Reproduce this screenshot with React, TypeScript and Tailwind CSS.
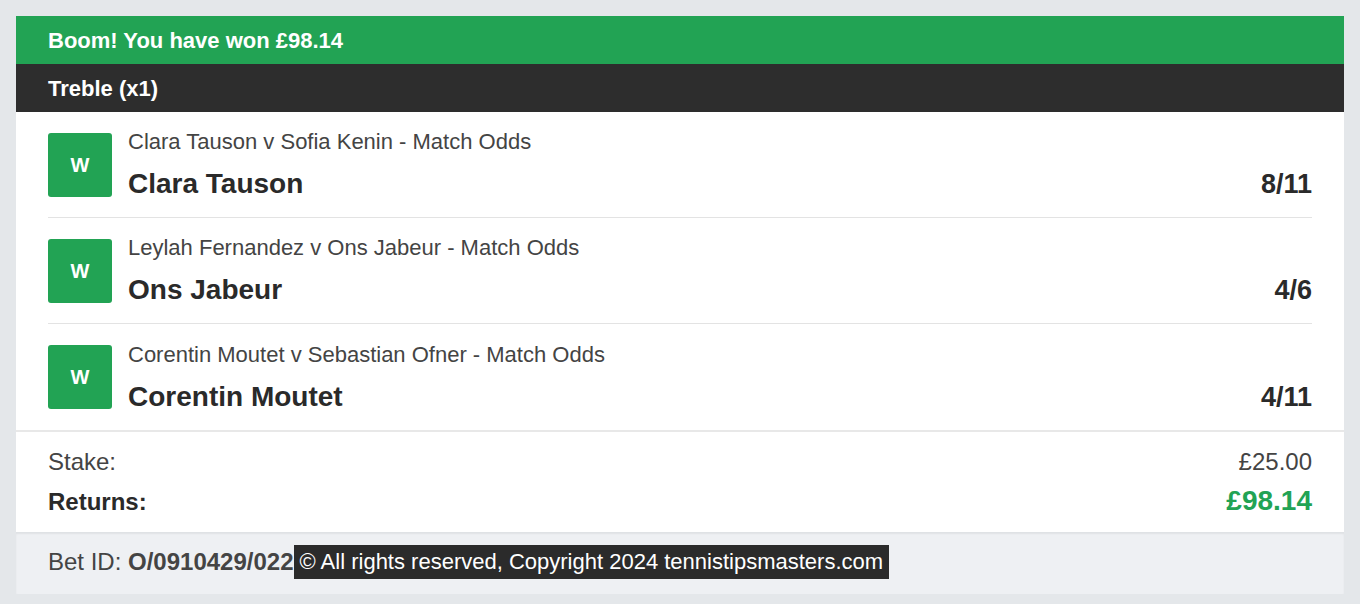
const LEGS = [
  { market: 'Clara Tauson v Sofia Kenin - Match Odds', pick: 'Clara Tauson', odds: '8/11' },
  { market: 'Leylah Fernandez v Ons Jabeur - Match Odds', pick: 'Ons Jabeur', odds: '4/6' },
  { market: 'Corentin Moutet v Sebastian Ofner - Match Odds', pick: 'Corentin Moutet', odds: '4/11' },
];

function LegRow({ market, pick, odds, last }: { market: string; pick: string; odds: string; last: boolean }) {
  return (
    <div className="px-8">
      <div className={`flex h-[106px] items-center ${last ? '' : 'border-b border-[#e3e3e3]'}`}>
        <div className="flex h-16 w-16 shrink-0 items-center justify-center rounded-[3px] bg-[#22a354] text-[20px] font-bold text-white">
          W
        </div>
        <div className="ml-4 flex flex-1 flex-col">
          <span className="text-[22px] leading-[26px] text-[#444]">{market}</span>
          <div className="mt-[13px] flex items-baseline justify-between text-[#2a2a2a]">
            <span className="text-[28px] font-bold leading-[32px]">{pick}</span>
            <span className="text-[27px] font-bold leading-[32px]">{odds}</span>
          </div>
        </div>
      </div>
    </div>
  );
}

export default function App() {
  return (
    <div className="min-h-[604px] bg-[#e4e7ea] p-4 font-['Liberation_Sans',Arial,sans-serif]">
      <div className="bg-white">
        <div className="flex h-12 items-center bg-[#22a354] px-8 text-[22px] font-bold text-white">
          Boom! You have won £98.14
        </div>
        <div className="flex h-12 items-center bg-[#2d2d2d] px-8 text-[22px] font-bold text-white">
          Treble (x1)
        </div>
        {LEGS.map((l, i) => (
          <LegRow key={l.pick} {...l} last={i === LEGS.length - 1} />
        ))}
        <div className="border-t-2 border-[#e8e8e8] px-8 pb-[14px] pt-[17px]">
          <div className="flex items-center justify-between text-[24px] leading-[26px] text-[#444]">
            <span>Stake:</span>
            <span>£25.00</span>
          </div>
          <div className="mt-[10px] flex items-baseline justify-between leading-[32px]">
            <span className="text-[24px] font-bold text-[#2a2a2a]">Returns:</span>
            <span className="text-[28px] font-bold text-[#22a354]">£98.14</span>
          </div>
        </div>
        <div className="flex h-[62px] items-center border-t border-[#dfe2e5] bg-[#eef0f3] px-8 pb-[4px] text-[24px] text-[#444] shadow-[inset_0_1px_2px_rgba(0,0,0,0.06)]">
          <span>Bet ID:&nbsp;</span>
          <span className="font-bold">O/0910429/022</span>
          <span className="bg-[#2b2b2b] px-[6px] py-[3px] text-[22px] leading-[28px] text-white">
            © All rights reserved, Copyright 2024 tennistipsmasters.com
          </span>
        </div>
      </div>
    </div>
  );
}
